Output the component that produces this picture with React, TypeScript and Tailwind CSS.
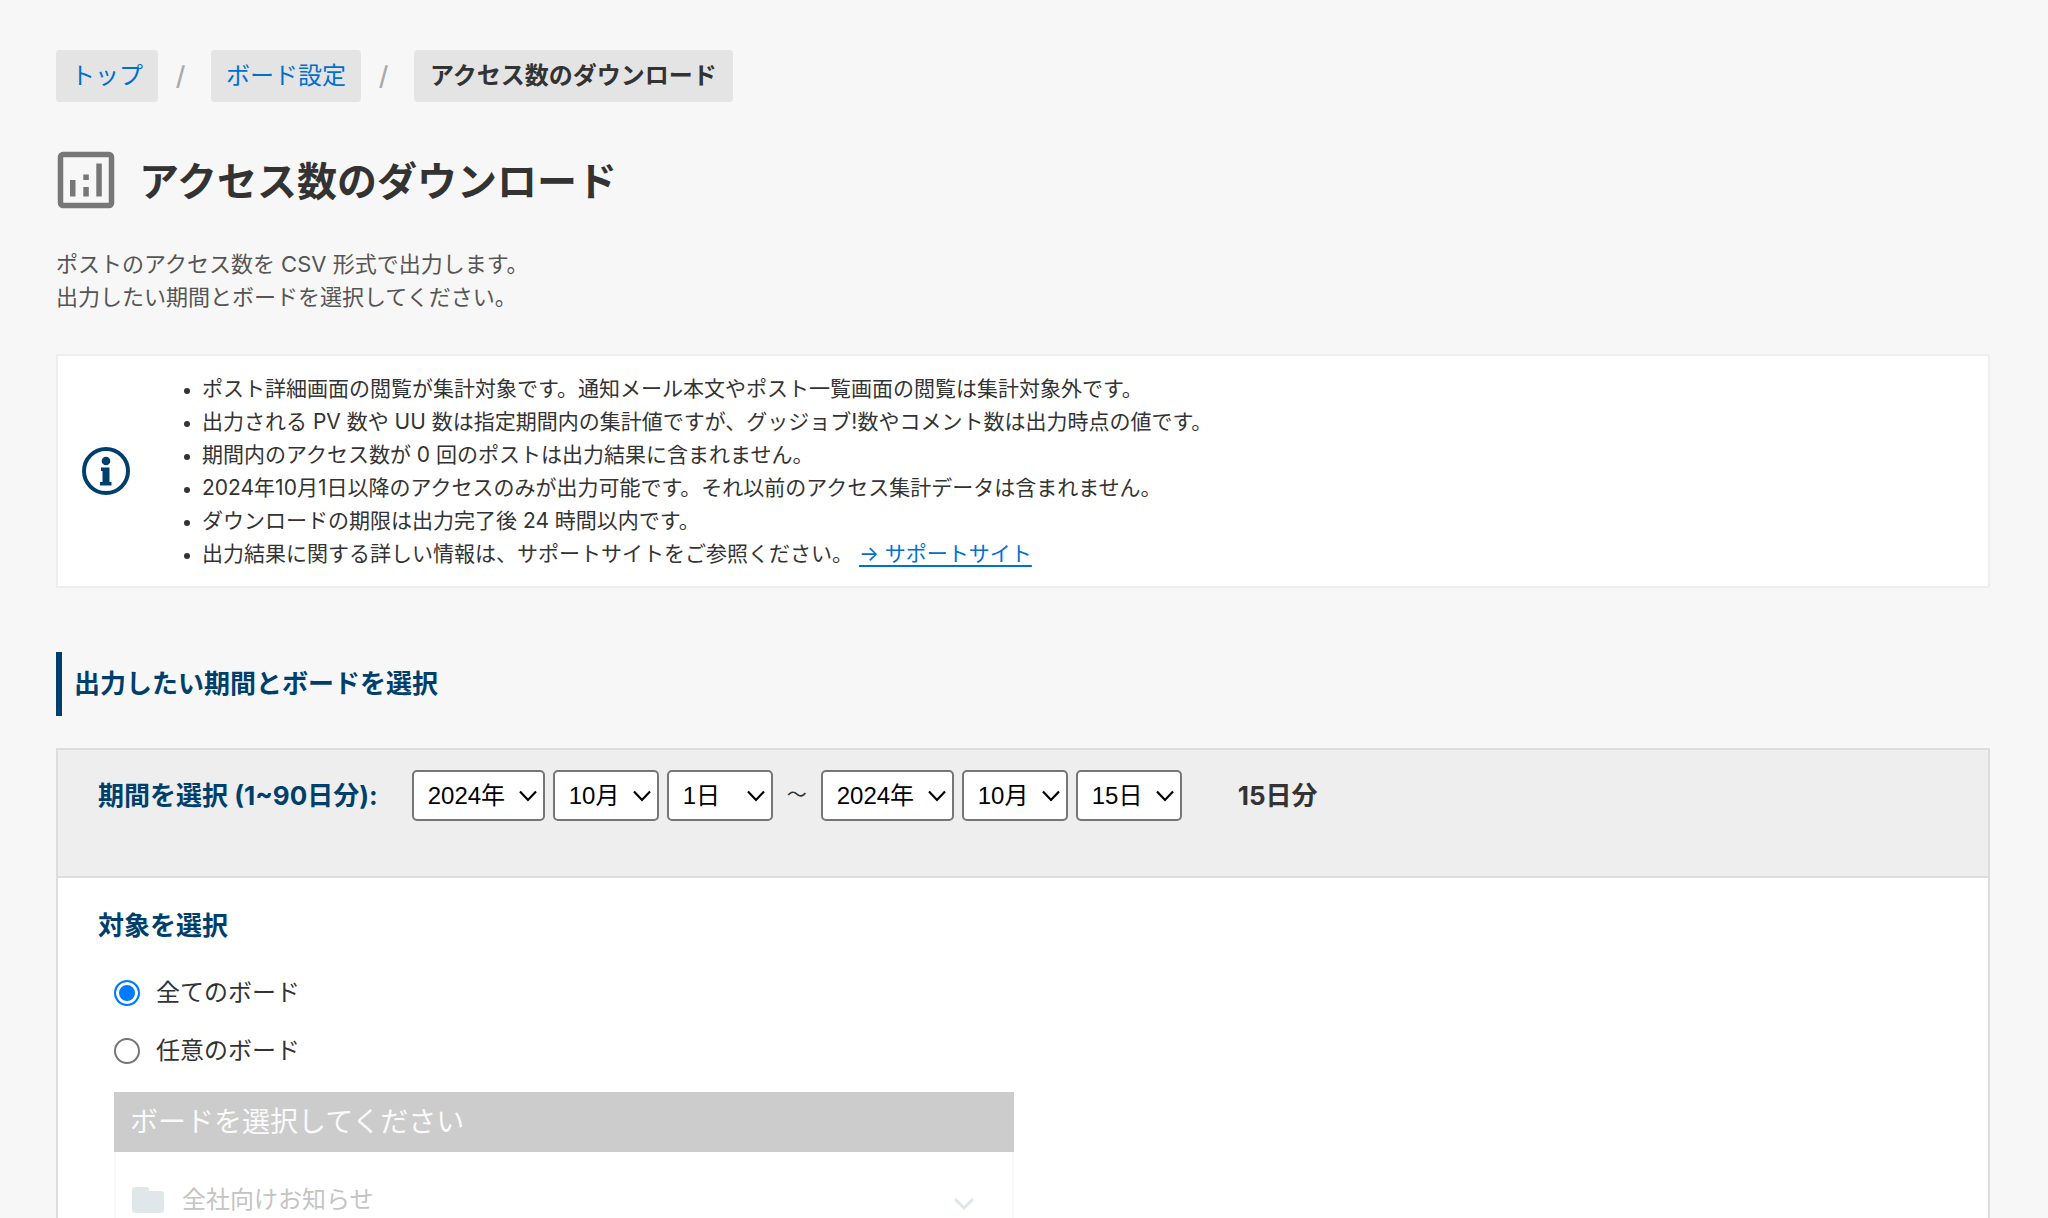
import { useState } from "react";

const notes = [
  "ポスト詳細画面の閲覧が集計対象です。通知メール本文やポスト一覧画面の閲覧は集計対象外です。",
  "出力される PV 数や UU 数は指定期間内の集計値ですが、グッジョブ!数やコメント数は出力時点の値です。",
  "期間内のアクセス数が 0 回のポストは出力結果に含まれません。",
  "2024年10月1日以降のアクセスのみが出力可能です。それ以前のアクセス集計データは含まれません。",
  "ダウンロードの期限は出力完了後 24 時間以内です。",
];

const years = ["2024年", "2025年"];
const months = Array.from({ length: 12 }, (_, i) => `${i + 1}月`);
const days = Array.from({ length: 31 }, (_, i) => `${i + 1}日`);

function ChartIcon() {
  return (
    <svg viewBox="0 0 58 58" className="size-[58px] shrink-0" fill="#777" aria-hidden="true">
      <rect x="3.5" y="3.5" width="51" height="51" rx="2.5" fill="none" stroke="#777" strokeWidth="5.5" />
      <rect x="13" y="29" width="5.5" height="16.500" />
      <rect x="26.300" y="23.500" width="5.5" height="5.5" />
      <rect x="26.300" y="36" width="5.5" height="9.500" />
      <rect x="39.300" y="12.500" width="5.5" height="33" />
    </svg>
  );
}

function InfoIcon() {
  return (
    <svg viewBox="0 0 48 48" className="size-12 shrink-0" fill="#003f6c" aria-hidden="true">
      <circle cx="24" cy="24" r="22" fill="none" stroke="#003f6c" strokeWidth="4" />
      <circle cx="24" cy="14" r="4.300" />
      <path d="M19 20.500h8.500v14.500h2v3.500h-11.500v-3.500h2.500v-11h-1.500z" />
    </svg>
  );
}

function FolderIcon() {
  return (
    <svg viewBox="0 0 32 26" className="h-[26px] w-8 shrink-0" fill="#dfe7ea" aria-hidden="true">
      <path d="M3 0h12q2 0 2 2v2h12q3 0 3 3v16q0 3-3 3H3q-3 0-3-3V3q0-3 3-3z" />
    </svg>
  );
}

function DateSelect({ label, options, initial, width }: { label: string; options: string[]; initial: string; width: string }) {
  return (
    <span className={`relative inline-flex ${width}`}>
      <select
        aria-label={label}
        defaultValue={initial}
        className="h-[51px] w-full appearance-none rounded-[5px] border-2 border-[#767676] bg-white pl-3.5 font-['Liberation_Sans','Noto_Sans_CJK_JP',sans-serif] text-2xl leading-8 text-black"
      >
        {options.map((o) => (
          <option key={o}>{o}</option>
        ))}
      </select>
      <svg viewBox="0 0 18 12" className="pointer-events-none absolute top-5 right-2 h-3 w-[18px]" fill="none" stroke="#000" strokeWidth="2.200" aria-hidden="true">
        <path d="M1 1.500l8 8.500 8-8.500" />
      </svg>
    </span>
  );
}

function BoardRadio({ label, checked, onSelect }: { label: string; checked: boolean; onSelect: () => void }) {
  return (
    <label className="flex h-[58px] items-center gap-4 text-2xl">
      <input
        type="radio"
        name="target"
        checked={checked}
        onChange={onSelect}
        className="size-[26px] shrink-0 appearance-none rounded-full border-2 border-[#767676] bg-white checked:border-[#007bff] checked:bg-[#007bff] checked:shadow-[inset_0_0_0_3px_#fff]"
      />
      {label}
    </label>
  );
}

export default function App() {
  const [target, setTarget] = useState("all");
  return (
    <div className="h-screen overflow-hidden bg-[#f7f7f7] pt-[50px] pr-[58px] pl-14 font-['Inter','Noto_Sans_CJK_JP',sans-serif] text-[#333]">
      <nav aria-label="パンくずリスト">
        <ol className="flex items-center text-2xl">
          <li className="rounded-[4px] bg-[#e4e4e4] px-[15px] py-2 leading-9">
            <a href="#top" className="text-[#006fcf]">トップ</a>
          </li>
          <li aria-hidden="true" className="w-[53px] pr-2 text-center text-[26px] font-medium text-[#aaa]">/</li>
          <li className="rounded-[4px] bg-[#e4e4e4] px-[15px] py-2 leading-9">
            <a href="#board" className="text-[#006fcf]">ボード設定</a>
          </li>
          <li aria-hidden="true" className="w-[53px] pr-2 text-center text-[26px] font-medium text-[#aaa]">/</li>
          <li aria-current="page" className="rounded-[4px] bg-[#e4e4e4] px-4 py-2 leading-9 font-bold">
            アクセス数のダウンロード
          </li>
        </ol>
      </nav>

      <main>
        <header className="mt-[46px] flex items-center gap-6 pl-px">
          <ChartIcon />
          <h1 className="pt-1 text-[40px] leading-[60px] font-bold">アクセス数のダウンロード</h1>
        </header>

        <p className="mt-9 text-[22px] leading-[33px] text-[#555]">
          ポストのアクセス数を CSV 形式で出力します。
          <br />
          出力したい期間とボードを選択してください。
        </p>

        <section className="mt-10 flex items-center border-2 border-[#eee] bg-white px-6 py-4">
          <InfoIcon />
          <ul className="ml-[50px] list-disc pl-[22px] text-[21px] leading-[33px] marker:text-lg">
            {notes.map((n) => (
              <li key={n}>{n}</li>
            ))}
            <li>
              出力結果に関する詳しい情報は、サポートサイトをご参照ください。{" "}
              <a href="#support" className="text-[#0070d2] underline decoration-2 underline-offset-4">→ サポートサイト</a>
            </li>
          </ul>
        </section>

        <h2 className="mt-16 border-l-6 border-[#003f6c] pl-3 text-[26px] leading-[64px] font-bold text-[#003f6c]">
          出力したい期間とボードを選択
        </h2>

        <div className="mt-8 border-2 border-[#ddd] bg-white">
          <div className="flex h-[128px] items-start border-b-2 border-[#ddd] bg-[#eee] pt-5 pl-10">
            <h3 className="mr-[34px] text-[26px] leading-[51px] font-bold text-[#003f6c]">期間を選択 (1~90日分):</h3>
            <div className="flex items-center gap-2">
              <DateSelect label="開始年" options={years} initial="2024年" width="w-[133px]" />
              <DateSelect label="開始月" options={months} initial="10月" width="w-[106px]" />
              <DateSelect label="開始日" options={days} initial="1日" width="w-[106px]" />
              <span className="w-8 text-center text-xl leading-[51px]">〜</span>
              <DateSelect label="終了年" options={years} initial="2024年" width="w-[133px]" />
              <DateSelect label="終了月" options={months} initial="10月" width="w-[106px]" />
              <DateSelect label="終了日" options={days} initial="15日" width="w-[106px]" />
            </div>
            <span className="ml-14 text-[26px] leading-[51px] font-bold">15日分</span>
          </div>

          <div className="pt-7 pl-10">
            <h3 className="text-[26px] leading-10 font-bold text-[#003f6c]">対象を選択</h3>
            <div className="mt-[18px] box-content w-[900px] max-w-full pl-4">
              <BoardRadio label="全てのボード" checked={target === "all"} onSelect={() => setTarget("all")} />
              <BoardRadio label="任意のボード" checked={target === "some"} onSelect={() => setTarget("some")} />
              <div className="mt-3">
                <div className="bg-[#ccc] px-4 text-[28px] leading-[60px] text-[#fafafa]">ボードを選択してください</div>
                <button type="button" disabled className="flex h-24 w-full items-center gap-[18px] border-x-2 border-[#f7f7f7] pr-[38px] pl-4 text-left text-2xl text-[#c4c4c4]">
                  <FolderIcon />
                  <span className="flex-1">全社向けお知らせ</span>
                  <svg viewBox="0 0 20 12" className="mt-2 h-3 w-5" fill="none" stroke="#dde6ea" strokeWidth="3" aria-hidden="true">
                    <path d="M1 1l9 9 9-9" />
                  </svg>
                </button>
              </div>
            </div>
          </div>
        </div>
      </main>
    </div>
  );
}
